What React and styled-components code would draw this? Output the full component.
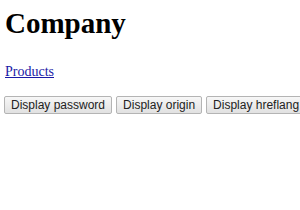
import React from 'react';
import styled, {createGlobalStyle} from 'styled-components';

const GlobalStyle = createGlobalStyle`
    body {
        margin: 0;
        padding: 0 5px;
        background: #ffffff;
        font-family: "Liberation Serif", "Times New Roman", serif;
        overflow: hidden;
    }
`;

const Page = styled.div`
    display: flex;
    flex-direction: column;
    align-items: flex-start;
    padding-top: 7px;
`;

const Title = styled.h1`
    margin: 0;
    font-size: 29px;
    font-weight: bold;
    line-height: 33px;
    color: #000;
`;

const NavLink = styled.a`
    margin-top: 24px;
    font-size: 14px;
    line-height: 16px;
    color: #1a1aa6;
    text-decoration: underline;
`;

const ButtonRow = styled.div`
    display: flex;
    gap: 4px;
    margin-top: 16px;
    margin-left: -1px;
    white-space: nowrap;
`;

const ActionButton = styled.button`
    flex-shrink: 0;
    height: 18px;
    padding: 0 6px;
    font-family: "Liberation Sans", Arial, sans-serif;
    font-size: 12px;
    color: #222;
    background: linear-gradient(#f7f7f7, #e1e1e1);
    border: 1px solid #b4b4b4;
    border-radius: 2px;
`;

const buttons = ['Display password', 'Display origin', 'Display hreflang'];

export default function App() {
    return (
        <Page>
            <GlobalStyle/>
            <Title>Company</Title>
            <NavLink href="#">Products</NavLink>
            <ButtonRow>
                {buttons.map(label => (
                    <ActionButton key={label}>{label}</ActionButton>
                ))}
            </ButtonRow>
        </Page>
    );
}
